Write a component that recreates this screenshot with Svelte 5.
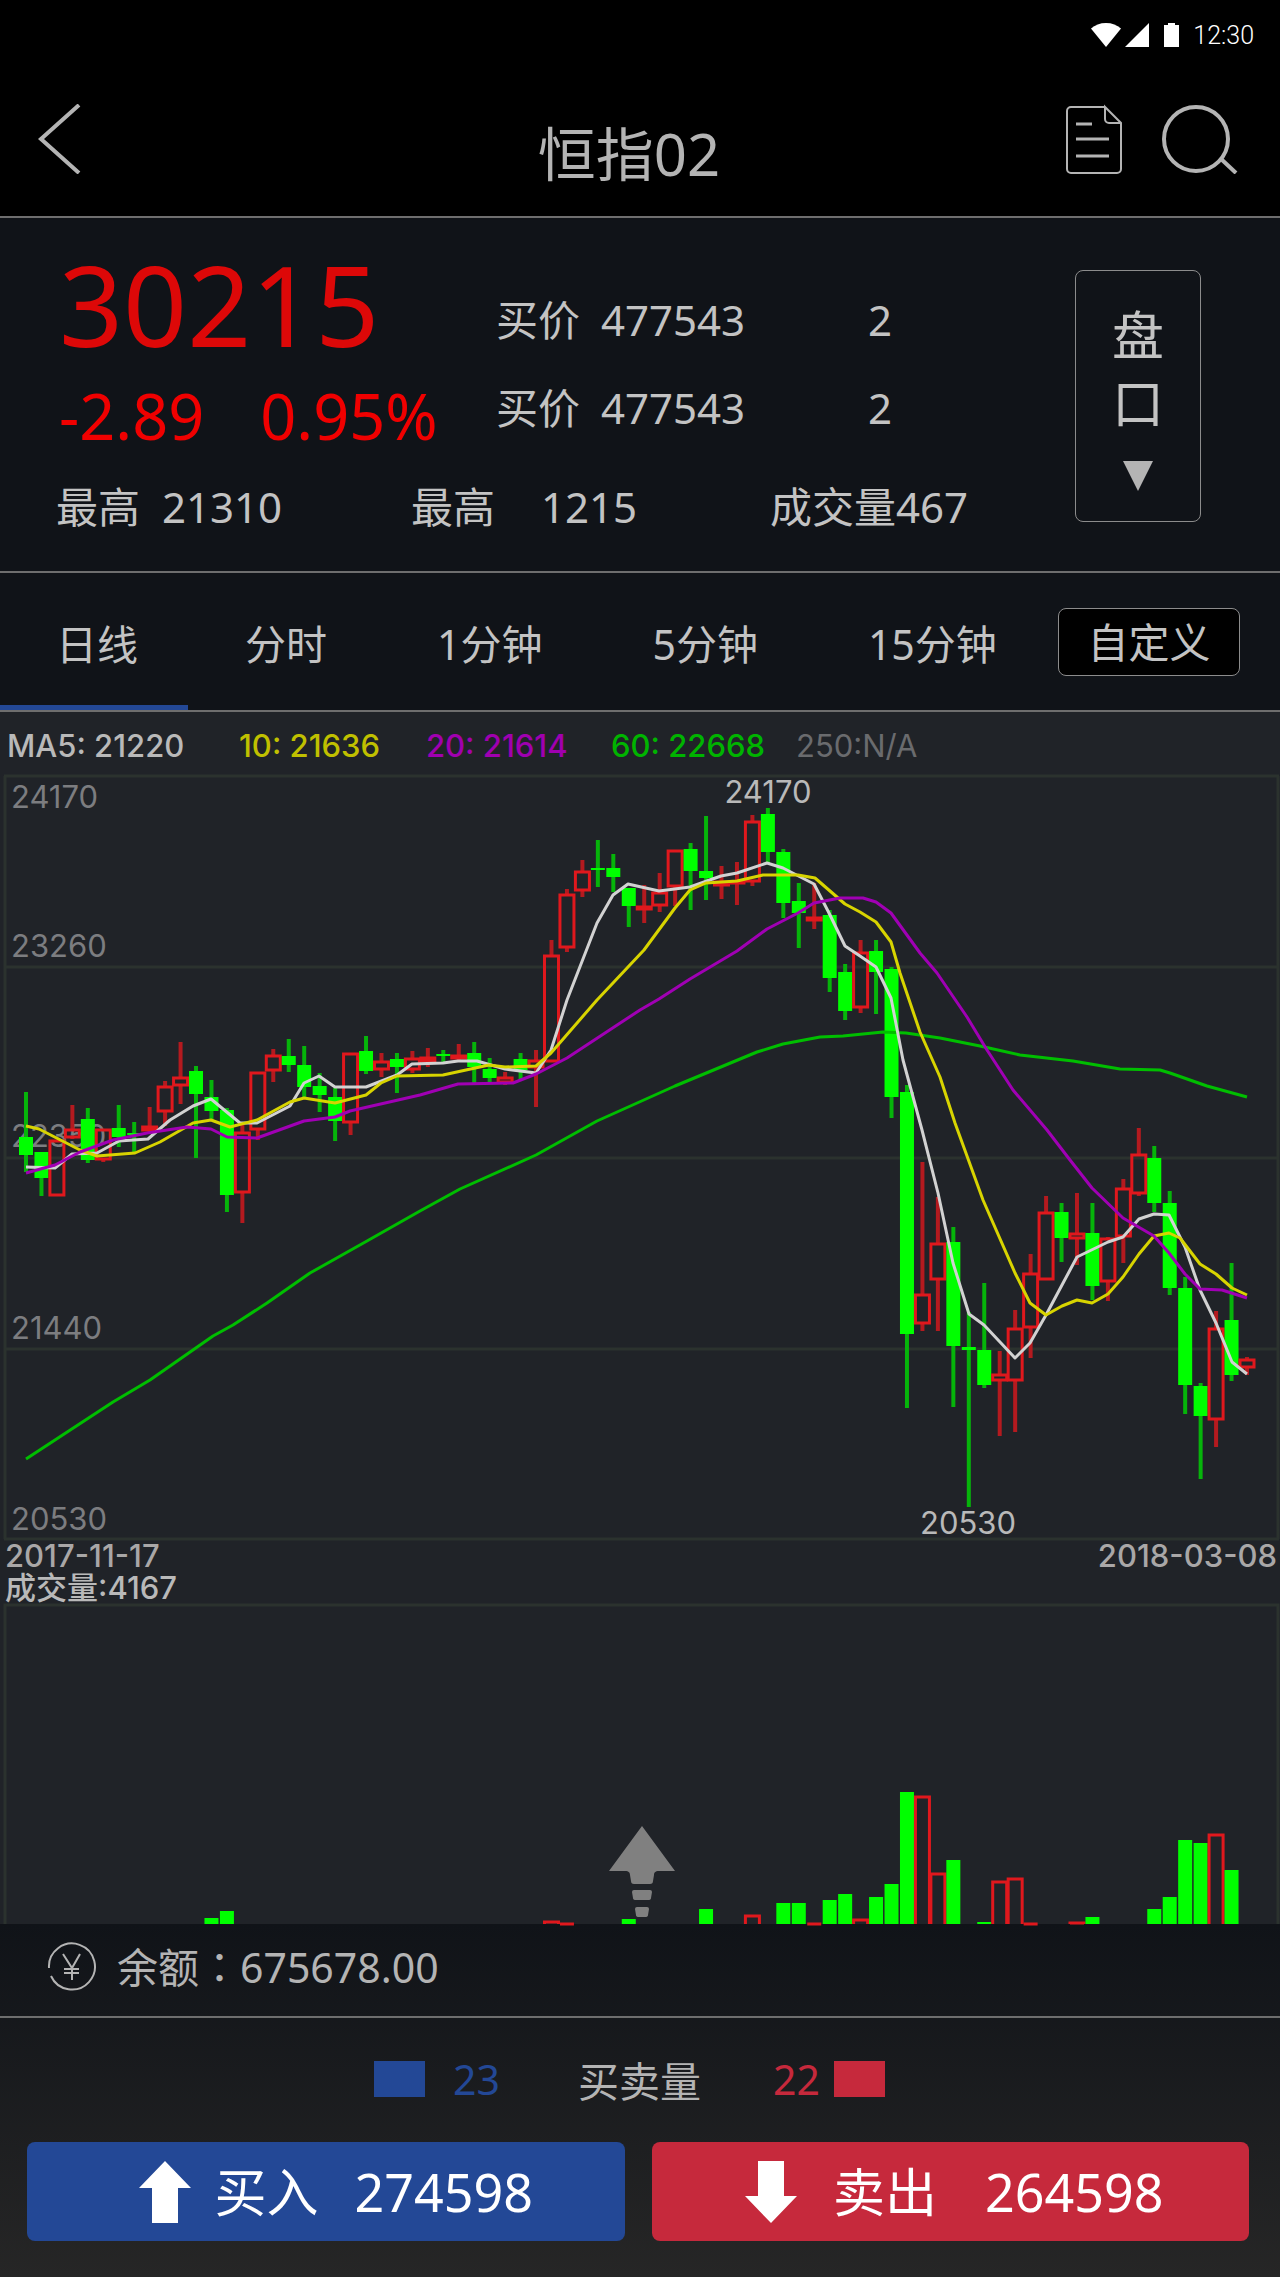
<script>
  const tabs = ['日线', '分时', '1分钟', '5分钟', '15分钟'];
  let activeTab = $state('日线');

  const offers = [
    { label: '买价', price: '477543', amount: 2 },
    { label: '买价', price: '477543', amount: 2 }
  ];

  const averages = [
    { text: 'MA5: 21220', cls: 'ma5' },
    { text: '10: 21636', cls: 'ma10' },
    { text: '20: 21614', cls: 'ma20' },
    { text: '60: 22668', cls: 'ma60' },
    { text: '250:N/A', cls: 'ma250' }
  ];

  const axis = [
    { y: 0, label: '24170', ty: 32 },
    { y: 191, label: '23260', ty: 181 },
    { y: 382, label: '22350', ty: 371 },
    { y: 573, label: '21440', ty: 563 },
    { y: 763, label: '20530', ty: 754 }
  ];

  // [up, high, body top, body bottom, low]
  const candles = [
    [0, 316, 361, 379, 396], [0, 376, 376, 402, 420], [1, 364, 364, 420, 420], [1, 329, 353, 362, 363],
    [0, 332, 343, 384, 387], [1, 353, 353, 384, 386], [0, 329, 352, 361, 371], [0, 346, 357, 359, 377],
    [1, 331, 350, 355, 356], [1, 305, 310, 336, 350], [1, 266, 301, 310, 328], [0, 290, 295, 318, 382],
    [0, 304, 321, 335, 345], [0, 332, 334, 419, 436], [1, 347, 356, 417, 447], [1, 296, 296, 354, 364],
    [1, 273, 279, 295, 306], [0, 263, 280, 289, 296], [0, 270, 289, 311, 321], [0, 297, 310, 319, 336],
    [0, 312, 321, 345, 365], [1, 277, 277, 347, 359], [0, 260, 275, 295, 298], [1, 277, 285, 294, 301],
    [0, 277, 283, 291, 317], [1, 275, 282, 294, 297], [1, 272, 281, 286, 291], [0, 274, 278, 280, 287],
    [1, 268, 279, 283, 284], [0, 266, 277, 291, 307], [0, 282, 293, 302, 307], [1, 296, 301, 307, 309],
    [0, 277, 283, 294, 304], [1, 274, 284, 292, 331], [1, 164, 179, 286, 286], [1, 113, 118, 172, 176],
    [1, 84, 95, 115, 121], [0, 64, 92, 94, 111], [0, 78, 92, 101, 116], [0, 112, 112, 130, 151],
    [1, 109, 130, 134, 147], [1, 97, 116, 130, 136], [1, 74, 74, 111, 130], [0, 67, 73, 95, 134],
    [0, 40, 95, 102, 124], [1, 90, 105, 110, 123], [1, 86, 105, 107, 129], [1, 39, 45, 106, 110],
    [0, 32, 38, 76, 87], [0, 73, 76, 127, 142], [0, 107, 125, 137, 172], [1, 107, 141, 145, 153],
    [0, 134, 139, 202, 216], [0, 188, 196, 235, 244], [1, 164, 176, 232, 237], [0, 164, 175, 196, 238],
    [0, 191, 193, 321, 342], [0, 309, 316, 558, 632], [1, 386, 518, 548, 555], [1, 421, 467, 504, 555],
    [0, 451, 466, 570, 631], [0, 536, 571, 574, 731], [0, 507, 574, 609, 612], [1, 575, 598, 605, 660],
    [1, 534, 552, 605, 656], [1, 478, 497, 552, 582], [1, 420, 436, 504, 504], [0, 427, 436, 462, 486],
    [1, 417, 457, 463, 489], [0, 427, 457, 510, 524], [1, 461, 462, 506, 525], [1, 403, 412, 461, 487],
    [1, 352, 378, 418, 420], [0, 370, 382, 427, 436], [0, 415, 427, 512, 519], [0, 501, 512, 609, 638],
    [0, 607, 610, 640, 703], [1, 535, 552, 644, 671], [0, 487, 544, 599, 605], [1, 581, 583, 592, 599]
  ];

  // index of the day -> visible bar height
  const volumes = {
    12: 6, 13: 13, 34: 3, 35: 1, 39: 5, 44: 15, 47: 9, 49: 21, 50: 21, 51: 1, 52: 24, 53: 30,
    54: 5, 55: 27, 56: 40, 57: 132, 58: 128, 59: 51, 60: 64, 62: 2, 63: 43, 64: 46, 65: 1,
    68: 2, 69: 7, 73: 15, 74: 27, 75: 84, 76: 81, 77: 90, 78: 54
  };
  const bars = Object.entries(volumes).map(([i, h]) => ({ i: Number(i), h, up: candles[i][0] }));

  const lines = [
    {
      cls: 'ma60',
      points: '26,683 113,626 150,604 213,560 233,549 267,527 310,497 367,465 420,435 460,413 536,379 597,345 675,310 757,276 783,268 820,261 843,260 883,256 906,257 940,262 980,270 1020,279 1073,285 1120,293 1160,294 1170,297 1207,310 1247,321'
    },
    {
      cls: 'ma5',
      points: '26,391 55,392 72,378 97,377 119,365 148,363 170,344 193,330 211,323 240,347 257,347 290,330 304,307 319,300 335,311 366,311 397,299 412,288 443,287 458,285 477,285 505,293 536,297 551,274 567,224 597,147 613,119 628,108 659,115 690,111 721,100 737,97 767,87 783,92 814,108 829,137 845,170 860,180 876,191 891,222 903,284 922,354 938,417 953,487 969,538 984,549 1015,582 1030,567 1046,539 1062,509 1077,481 1108,466 1123,461 1139,443 1154,438 1169,439 1185,471 1200,514 1216,547 1232,586 1247,598'
    },
    {
      cls: 'ma10',
      points: '26,350 39,353 80,374 97,380 135,377 160,366 193,347 211,344 230,351 257,344 290,326 304,322 335,327 366,319 381,307 397,300 443,299 489,289 505,291 536,290 551,277 597,224 644,174 675,132 690,114 706,107 737,105 763,99 798,99 815,102 845,128 860,136 876,146 891,166 900,197 920,256 940,301 955,347 983,424 1015,497 1030,527 1046,539 1062,530 1077,524 1092,527 1108,518 1123,501 1139,478 1154,460 1169,457 1180,462 1200,488 1216,498 1232,512 1247,519'
    },
    {
      cls: 'ma20',
      points: '26,397 55,389 80,376 113,364 147,357 187,351 211,353 227,361 257,362 304,345 335,341 350,335 420,319 458,308 513,307 536,298 567,282 640,234 659,223 690,203 737,175 767,153 798,137 814,127 840,122 863,122 876,126 891,137 920,177 937,197 967,241 987,274 1013,314 1047,354 1070,384 1092,412 1123,442 1154,460 1169,477 1185,498 1200,513 1222,514 1247,522'
    }
  ];

  const xOf = (i) => 26 + (i * 1221) / 79;
</script>

<div class="app">
  <header>
    <div class="status">
      <svg width="90" height="24" viewBox="0 0 90 24" fill="#fff" aria-hidden="true">
        <path d="M0 5.500C4 2 9 0 15 0s11 2 15 5.500L15 24z" />
        <path d="M58 0v24H34z" />
        <path d="M73 2h4V0h7v2h4v22H73z" />
      </svg>
      <span>12:30</span>
    </div>
    <nav>
      <a class="back" href="#back" aria-label="返回">
        <svg width="44" height="70" viewBox="0 0 44 70" fill="none" stroke="#b4b4b4" stroke-width="4">
          <path d="M41 1L3 35l38 34" />
        </svg>
      </a>
      <h1>恒指02</h1>
      <div class="nav-icons">
        <button aria-label="订单">
          <svg width="56" height="70" viewBox="0 0 56 70" fill="none" stroke="#b4b4b4" stroke-width="2">
            <path d="M39 3H5a4 4 0 0 0-4 4v58a4 4 0 0 0 4 4h46a4 4 0 0 0 4-4V19L39 3v12a4 4 0 0 0 4 4h12" />
            <path d="M10 20h16M10 35h33M10 52h33" stroke-width="3" />
          </svg>
        </button>
        <button aria-label="搜索">
          <svg width="76" height="70" viewBox="0 0 76 70" fill="none" stroke="#b4b4b4" stroke-width="4">
            <circle cx="34" cy="35" r="32" />
            <path d="M58 54l16 15" />
          </svg>
        </button>
      </div>
    </nav>
  </header>

  <section class="quote">
    <div class="quote-main">
      <div class="quote-top">
        <div class="last">
          <div class="price">30215</div>
          <div class="change"><span>-2.89</span><span>0.95%</span></div>
        </div>
        <div class="offers">
          {#each offers as offer}
            <div class="offer">
              <span>{offer.label}</span>
              <span>{offer.price}</span>
              <span>{offer.amount}</span>
            </div>
          {/each}
        </div>
      </div>
      <div class="stats">
        <div class="stat"><span>最高</span><span>21310</span></div>
        <div class="stat wide"><span>最高</span><span>1215</span></div>
        <div class="stat">成交量467</div>
      </div>
    </div>
    <button class="depth">
      <span>盘</span>
      <span>口</span>
      <svg width="30" height="30" viewBox="0 0 30 30" fill="#b4b4b4" aria-hidden="true"><path d="M0 0h30L15 30z" /></svg>
    </button>
  </section>

  <div class="tabs">
    {#each tabs as tab}
      <button class="tab" class:active={activeTab === tab} onclick={() => (activeTab = tab)}>{tab}</button>
    {/each}
    <button class="custom">自定义</button>
  </div>

  <section class="chart">
    <div class="averages">
      {#each averages as ma}
        <span class={ma.cls}>{ma.text}</span>
      {/each}
    </div>

    <svg class="plot" viewBox="0 -1 1280 765" role="img" aria-label="日线">
      {#each axis as row}
        <line class="grid" x1="4" x2="1279" y1={row.y} y2={row.y} />
        <text class="axis" x="11" y={row.ty}>{row.label}</text>
      {/each}
      <path class="grid" d="M5 0V763M1278 0V763" />

      {#each candles as [up, high, top, bottom, low], i}
        <g class={up ? 'up' : 'down'}>
          <path class="wick" d="M{xOf(i)} {high}V{top}M{xOf(i)} {bottom}V{low}" />
          {#if up}
            <rect class="body" x={xOf(i) - 7} y={top + 1} width="14" height={Math.max(bottom - top - 2, 1)} />
          {:else}
            <rect class="body" x={xOf(i) - 7} y={top} width="14" height={bottom - top} />
          {/if}
        </g>
      {/each}

      {#each lines as line}
        <polyline class="line {line.cls}" points={line.points} />
      {/each}

      <text class="mark" x="768" y="27">24170</text>
      <text class="mark" x="968" y="758">20530</text>
    </svg>

    <div class="dates"><span>2017-11-17</span><span>2018-03-08</span></div>
    <div class="volume-title">成交量:4167</div>

    <svg class="plot" viewBox="0 0 1280 320" role="img" aria-label="成交量">
      <path class="grid" d="M5 320V1H1278V320" />
      {#each bars as bar}
        <g class={bar.up ? 'up' : 'down'}>
          {#if bar.up}
            <path class="body" d="M{xOf(bar.i) - 7} 320V{321 - bar.h}h14V320" />
          {:else}
            <rect class="body" x={xOf(bar.i) - 7} y={320 - bar.h} width="14" height={bar.h} />
          {/if}
        </g>
      {/each}
    </svg>

    <button class="expand" aria-label="展开">
      <svg width="66" height="92" viewBox="0 0 66 92" fill="#808080">
        <path d="M33 0l33 45H50c-4 0-5 2-5 4l-1 6c0 2-1 3-3 3H25c-2 0-3-1-3-3l-1-6c0-2-1-4-5-4H0z" />
        <path d="M25 64h16q2 0 2 2l-1 6q0 2-3 2H27q-3 0-3-2l-1-6q0-2 2-2z" />
        <path d="M28 81h10q2 0 2 2l-1 6q0 2-3 2h-6q-3 0-3-2l-1-6q0-2 2-2z" />
      </svg>
    </button>
  </section>

  <footer>
    <div class="balance">
      <svg width="50" height="50" viewBox="0 0 50 50" fill="none" stroke="#b4b4b4" stroke-width="2" aria-hidden="true">
        <path d="M2 27A23 23 0 1 1 4 35" />
        <path d="M16 13l9 14 8-14M25 27v12M17 28h15M17 32h15" />
      </svg>
      <span>余额<span class="colon">：</span>675678.00</span>
    </div>

    <div class="ratio">
      <i class="box buy"></i>
      <span class="num buy-text">23</span>
      <span class="ratio-label">买卖量</span>
      <span class="num sell-text">22</span>
      <i class="box sell"></i>
    </div>

    <div class="actions">
      <button class="action buy">
        <svg width="52" height="62" viewBox="0 0 52 62" fill="#fff" aria-hidden="true"><path d="M26 0l26 27H39v35H13V27H0z" /></svg>
        <span class="side">买入</span>
        <span>274598</span>
      </button>
      <button class="action sell">
        <svg width="52" height="62" viewBox="0 0 52 62" fill="#fff" aria-hidden="true"><path d="M26 62L0 35h13V0h26v35h13z" /></svg>
        <span class="side">卖出</span>
        <span>264598</span>
      </button>
    </div>
  </footer>
</div>

<style>
  :global(body) {
    margin: 0;
    background: #262626;
  }

  .app {
    background: #101318;
    color: #c3c3c3;
    font-family: 'Noto Sans', 'Noto Sans CJK SC', sans-serif;
    font-size: 41px;
  }

  button {
    margin: 0;
    padding: 0;
    border: none;
    background: none;
    color: inherit;
    font: inherit;
    cursor: pointer;
  }

  svg { display: block; }

  /* HEADER */
  header { background: #000; border-bottom: 2px solid #6e6e6e; }

  .status {
    display: flex;
    align-items: center;
    justify-content: flex-end;
    gap: 12px;
    height: 70px;
    padding-right: 26px;
    color: #fff;
    font-family: Roboto, sans-serif;
    font-size: 25px;
    font-weight: 300;
  }

  nav {
    display: grid;
    grid-template-columns: 1fr auto 1fr;
    padding: 34px 42px 12px 38px;
  }

  .back { justify-self: start; }

  h1 {
    margin: 0 18px 0 0;
    color: #b4b4b4;
    font-size: 58px;
    font-weight: 400;
    line-height: 100px;
  }

  .nav-icons {
    display: flex;
    justify-content: flex-end;
    align-items: flex-start;
    gap: 40px;
  }

  /* QUOTE */
  .quote {
    display: flex;
    justify-content: space-between;
    align-items: flex-start;
    padding: 30px 79px 34px 56px;
    border-bottom: 2px solid #6e6e6e;
    font-size: 42px;
  }

  .quote-top { display: grid; grid-template-columns: 440px auto; }
  .last { padding-left: 3px; }
  .price { color: #dd0808; font-size: 112px; line-height: 112px; }
  .change { display: flex; gap: 56px; margin-top: 16px; color: #f00000; font-size: 63px; line-height: 80px; }
  .offers { padding-top: 28px; }
  .offer { display: grid; grid-template-columns: 105px 267px auto; line-height: 88px; }

  .stats { display: grid; grid-template-columns: 355px 359px auto; margin-top: 21px; line-height: 60px; }
  .stat { display: flex; gap: 22px; }
  .stat.wide { gap: 46px; }

  .depth {
    display: flex;
    flex-direction: column;
    align-items: center;
    box-sizing: border-box;
    width: 126px;
    height: 252px;
    margin-top: 22px;
    padding-top: 30px;
    border: 1px solid #8c8c8c;
    border-radius: 8px;
    font-size: 52px;
    line-height: 68px;
  }
  .depth svg { margin-top: 24px; }

  /* TABS */
  .tabs {
    display: flex;
    align-items: center;
    height: 137px;
    padding-right: 40px;
    border-bottom: 2px solid #6e6e6e;
  }

  .tab {
    box-sizing: border-box;
    height: 100%;
    padding: 0 55px;
    border-top: 5px solid transparent;
    border-bottom: 5px solid transparent;
    white-space: nowrap;
  }
  .tab:first-child { margin-right: 2px; padding: 0 50px 0 56px; }
  .tab.active { border-bottom-color: #234896; }

  .custom {
    flex: none;
    box-sizing: border-box;
    width: 182px;
    height: 68px;
    margin-left: auto;
    border: 1px solid #8c8c8c;
    border-radius: 8px;
    background: #000;
    line-height: 60px;
  }

  /* CHART */
  .chart {
    position: relative;
    background: #202328;
    font-family: Inter, 'Noto Sans CJK SC', sans-serif;
    font-size: 31px;
    line-height: 32px;
  }

  .averages {
    display: grid;
    grid-template-columns: 232px 187px 185px 185px auto;
    padding: 18px 7px 13px;
    font-weight: 500;
  }
  .averages .ma5 { color: #b9b9b9; }
  .averages .ma10 { color: #c0c000; }
  .averages .ma20 { color: #a000b0; }
  .averages .ma60 { color: #00b400; }
  .averages .ma250 { color: #6a6b6e; font-weight: 400; }

  .plot { width: 100%; height: auto; overflow: visible; }
  .grid { fill: none; stroke: #2b322e; stroke-width: 3; }
  .axis { fill: #7c7d80; font-size: 31px; }
  .mark { fill: #b9b9b9; font-size: 31px; text-anchor: middle; }

  .up .wick { stroke: #b41a1f; stroke-width: 4; }
  .up .body { fill: none; stroke: #e0181d; stroke-width: 3; }
  .down .wick { stroke: #06b40a; stroke-width: 4; }
  .down .body { fill: #00ff00; }

  .line { fill: none; stroke-width: 3; stroke-linejoin: round; }
  .line.ma5 { stroke: #d2d2d2; }
  .line.ma10 { stroke: #d8d400; }
  .line.ma20 { stroke: #a000b4; }
  .line.ma60 { stroke: #00be00; }

  .dates { display: flex; justify-content: space-between; padding: 0 3px 0 5px; color: #a9a7a7; font-weight: 500; }
  .volume-title { padding-left: 5px; color: #b9b9b9; font-weight: 500; }

  .expand { position: absolute; bottom: 6px; left: 50%; margin-left: -31px; }

  /* FOOTER */
  footer { background: linear-gradient(#101318, #262626); }

  .balance {
    display: flex;
    align-items: center;
    gap: 20px;
    height: 92px;
    padding: 0 47px;
    border-bottom: 2px solid #6e6e6e;
    color: #b4b4b4;
    line-height: 84px;
  }
  .balance > span { padding-bottom: 8px; }
  .balance > svg { margin-bottom: 8px; }
  .colon { font-family: 'Noto Sans CJK TC', sans-serif; }

  .ratio {
    display: flex;
    align-items: center;
    justify-content: center;
    height: 122px;
    padding: 0 21px 2px 0;
    color: #b4b4b4;
  }
  .box { width: 51px; height: 36px; }
  .buy { background: #234896; }
  .sell { background: #c6293c; }
  .buy-text { margin-left: 28px; color: #234896; }
  .ratio-label { margin: 0 72px 0 78px; }
  .sell-text { margin-right: 14px; color: #c6293c; }

  .actions { display: grid; grid-template-columns: 1fr 1fr; gap: 27px; padding: 0 31px 36px 27px; }

  .action {
    display: flex;
    align-items: center;
    justify-content: center;
    gap: 36px;
    height: 99px;
    border-radius: 8px;
    color: #fff;
    font-size: 52px;
    line-height: 96px;
  }
  .action.buy { padding-left: 20px; }
  .action.sell { gap: 48px; padding-left: 8px; }
  .side { margin-left: -12px; }
</style>
